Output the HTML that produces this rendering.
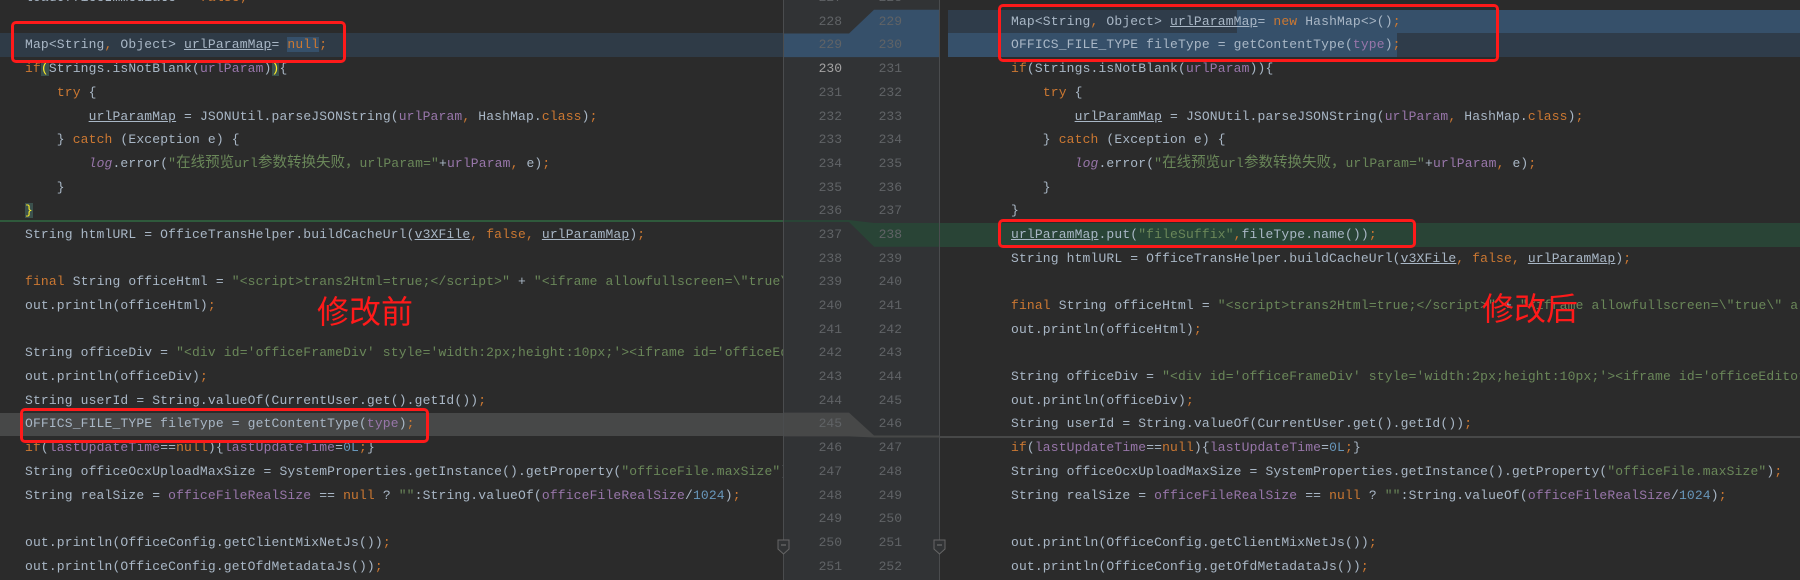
<!DOCTYPE html>
<html><head><meta charset="utf-8"><style>
*{margin:0;padding:0;box-sizing:border-box}
body{width:1800px;height:580px;background:#2b2b2b;overflow:hidden;position:relative;font-family:"Liberation Mono",monospace;font-size:13px;color:#a9b7c6}
.abs{position:absolute}
.code{position:absolute;top:-13.95px;overflow:hidden;letter-spacing:0.15px}
.code div{height:23.7px;line-height:23.7px;white-space:pre}
.k{color:#cc7832}.s{color:#6a8759}.f{color:#9876aa}.n{color:#6897bb}.u{text-decoration:underline}.i{font-style:italic;color:#9876aa}
.c{font-family:"Liberation Mono","Noto Sans CJK SC",sans-serif;font-size:14.5px;letter-spacing:0}
.br{color:#ffef28;background:#3b514d}
.nb{background:#36506a}
.gut{position:absolute;top:-13.95px;color:#606366;text-align:right;width:40px}
.gut div{height:23.7px;line-height:23.7px}
.box{position:absolute;border:3px solid #ff1a1a;border-radius:5px}
.ann{position:absolute;color:#ff1a1a;font-family:"Noto Sans CJK SC",sans-serif;font-size:32px;line-height:36px}
</style></head><body>
<div class="abs" style="left:0;top:33.45px;width:784px;height:23.7px;background:#2f3b47"></div>
<div class="abs" style="left:0;top:220px;width:784px;height:2px;background:#2f5a3c"></div>
<div class="abs" style="left:0;top:412.65px;width:784px;height:23.7px;background:#474848"></div>
<div class="abs" style="left:784px;top:0;width:155px;height:580px;background:#313335"></div>
<div class="abs" style="left:948px;top:9.75px;width:289px;height:23.7px;background:#2f3c4a"></div>
<div class="abs" style="left:1237px;top:9.75px;width:563px;height:23.7px;background:#36506a"></div>
<div class="abs" style="left:948px;top:33.45px;width:449px;height:23.7px;background:#36506a"></div>
<div class="abs" style="left:1397px;top:33.45px;width:403px;height:23.7px;background:#2f3c4a"></div>
<div class="abs" style="left:939px;top:223.05px;width:861px;height:23.7px;background:#294436"></div>
<div class="abs" style="left:939px;top:435.5px;width:861px;height:2px;background:#474848"></div>
<svg class="abs" style="left:0;top:0" width="1800" height="580">
<polygon points="784,33.45 849,33.45 874,9.75 939,9.75 939,57.15 784,57.15" fill="#36506a"/>
<polygon points="784,220 849,220 874,223.05 939,223.05 939,246.75 874,246.75 849,222 784,222" fill="#294436"/>
<polygon points="784,412.65 849,412.65 874,435.5 939,435.5 939,437.5 874,437.5 849,436.35 784,436.35" fill="#474848"/>
<line x1="783.5" y1="0" x2="783.5" y2="580" stroke="#4a4c4e"/>
<line x1="939.5" y1="0" x2="939.5" y2="580" stroke="#4a4c4e"/>
<path d="M778 540h11v9l-5.5 5-5.5-5z" fill="#313335" stroke="#666"/>
<line x1="781" y1="545" x2="786" y2="545" stroke="#777"/>
<path d="M934 540h11v9l-5.5 5-5.5-5z" fill="#313335" stroke="#666"/>
<line x1="937" y1="545" x2="942" y2="545" stroke="#777"/>
</svg>
<div class="gut" style="left:802px"><div>227</div><div>228</div><div>229</div><div style="color:#a4a3a3">230</div><div>231</div><div>232</div><div>233</div><div>234</div><div>235</div><div>236</div><div>237</div><div>238</div><div>239</div><div>240</div><div>241</div><div>242</div><div>243</div><div>244</div><div>245</div><div>246</div><div>247</div><div>248</div><div>249</div><div>250</div><div>251</div></div>
<div class="gut" style="left:862px"><div>228</div><div>229</div><div>230</div><div>231</div><div>232</div><div>233</div><div>234</div><div>235</div><div>236</div><div>237</div><div>238</div><div>239</div><div>240</div><div>241</div><div>242</div><div>243</div><div>244</div><div>245</div><div>246</div><div>247</div><div>248</div><div>249</div><div>250</div><div>251</div><div>252</div></div>
<div class="code" style="left:0;width:783px;padding-left:25px">
<div>loadOfficeImmediate = <span class="k">false</span><span class="k">;</span></div>
<div></div>
<div>Map&lt;String<span class="k">,</span> Object&gt; <span class="u">urlParamMap</span>= <span class="k nb">null</span><span class="k">;</span></div>
<div><span class="k">if</span><span class="br">(</span>Strings.isNotBlank(<span class="f">urlParam</span>)<span class="br">)</span>{</div>
<div>    <span class="k">try</span> {</div>
<div>        <span class="u">urlParamMap</span> = JSONUtil.parseJSONString(<span class="f">urlParam</span><span class="k">,</span> HashMap.<span class="k">class</span>)<span class="k">;</span></div>
<div>    } <span class="k">catch</span> (Exception e) {</div>
<div>        <span class="i">log</span>.error(<span class="s">"<span class="c">在线预览</span>url<span class="c">参数转换失败，</span>urlParam="</span>+<span class="f">urlParam</span><span class="k">,</span> e)<span class="k">;</span></div>
<div>    }</div>
<div><span class="br">}</span></div>
<div>String htmlURL = OfficeTransHelper.buildCacheUrl(<span class="u">v3XFile</span><span class="k">,</span> <span class="k">false</span><span class="k">,</span> <span class="u">urlParamMap</span>)<span class="k">;</span></div>
<div></div>
<div><span class="k">final</span> String officeHtml = <span class="s">"&lt;script&gt;trans2Html=true;&lt;/script&gt;"</span> + <span class="s">"&lt;iframe allowfullscreen=\"true\" allow=\"fullscreen\""</span></div>
<div>out.println(officeHtml)<span class="k">;</span></div>
<div></div>
<div>String officeDiv = <span class="s">"&lt;div id='officeFrameDiv' style='width:2px;height:10px;'&gt;&lt;iframe id='officeEditorFrame'"</span></div>
<div>out.println(officeDiv)<span class="k">;</span></div>
<div>String userId = String.valueOf(CurrentUser.get().getId())<span class="k">;</span></div>
<div>OFFICS_FILE_TYPE fileType = getContentType(<span class="f">type</span>)<span class="k">;</span></div>
<div><span class="k">if</span>(<span class="f">lastUpdateTime</span>==<span class="k">null</span>){<span class="f">lastUpdateTime</span>=<span class="n">0L</span><span class="k">;</span>}</div>
<div>String officeOcxUploadMaxSize = SystemProperties.getInstance().getProperty(<span class="s">"officeFile.maxSize"</span>)<span class="k">;</span></div>
<div>String realSize = <span class="f">officeFileRealSize</span> == <span class="k">null</span> ? <span class="s">""</span>:String.valueOf(<span class="f">officeFileRealSize</span>/<span class="n">1024</span>)<span class="k">;</span></div>
<div></div>
<div>out.println(OfficeConfig.getClientMixNetJs())<span class="k">;</span></div>
<div>out.println(OfficeConfig.getOfdMetadataJs())<span class="k">;</span></div>
</div>
<div class="code" style="left:940px;width:860px;padding-left:71px">
<div></div>
<div>Map&lt;String<span class="k">,</span> Object&gt; <span class="u">urlParamMap</span>= <span class="k">new</span> HashMap&lt;&gt;()<span class="k">;</span></div>
<div>OFFICS_FILE_TYPE fileType = getContentType(<span class="f">type</span>)<span class="k">;</span></div>
<div><span class="k">if</span>(Strings.isNotBlank(<span class="f">urlParam</span>)){</div>
<div>    <span class="k">try</span> {</div>
<div>        <span class="u">urlParamMap</span> = JSONUtil.parseJSONString(<span class="f">urlParam</span><span class="k">,</span> HashMap.<span class="k">class</span>)<span class="k">;</span></div>
<div>    } <span class="k">catch</span> (Exception e) {</div>
<div>        <span class="i">log</span>.error(<span class="s">"<span class="c">在线预览</span>url<span class="c">参数转换失败，</span>urlParam="</span>+<span class="f">urlParam</span><span class="k">,</span> e)<span class="k">;</span></div>
<div>    }</div>
<div>}</div>
<div><span class="u">urlParamMap</span>.put(<span class="s">"fileSuffix"</span><span class="k">,</span>fileType.name())<span class="k">;</span></div>
<div>String htmlURL = OfficeTransHelper.buildCacheUrl(<span class="u">v3XFile</span><span class="k">,</span> <span class="k">false</span><span class="k">,</span> <span class="u">urlParamMap</span>)<span class="k">;</span></div>
<div></div>
<div><span class="k">final</span> String officeHtml = <span class="s">"&lt;script&gt;trans2Html=true;&lt;/script&gt;"</span> + <span class="s">"&lt;iframe allowfullscreen=\"true\" allow=\"fullscreen\""</span></div>
<div>out.println(officeHtml)<span class="k">;</span></div>
<div></div>
<div>String officeDiv = <span class="s">"&lt;div id='officeFrameDiv' style='width:2px;height:10px;'&gt;&lt;iframe id='officeEditorFrame'"</span></div>
<div>out.println(officeDiv)<span class="k">;</span></div>
<div>String userId = String.valueOf(CurrentUser.get().getId())<span class="k">;</span></div>
<div><span class="k">if</span>(<span class="f">lastUpdateTime</span>==<span class="k">null</span>){<span class="f">lastUpdateTime</span>=<span class="n">0L</span><span class="k">;</span>}</div>
<div>String officeOcxUploadMaxSize = SystemProperties.getInstance().getProperty(<span class="s">"officeFile.maxSize"</span>)<span class="k">;</span></div>
<div>String realSize = <span class="f">officeFileRealSize</span> == <span class="k">null</span> ? <span class="s">""</span>:String.valueOf(<span class="f">officeFileRealSize</span>/<span class="n">1024</span>)<span class="k">;</span></div>
<div></div>
<div>out.println(OfficeConfig.getClientMixNetJs())<span class="k">;</span></div>
<div>out.println(OfficeConfig.getOfdMetadataJs())<span class="k">;</span></div>
</div>
<div class="box" style="left:11px;top:21px;width:335px;height:42px"></div>
<div class="box" style="left:20px;top:408px;width:409px;height:35px"></div>
<div class="box" style="left:998px;top:4px;width:501px;height:58px"></div>
<div class="box" style="left:998px;top:219px;width:418px;height:29px"></div>
<div class="ann" style="left:317px;top:292px">修改前</div>
<div class="ann" style="left:1482px;top:289px">修改后</div>
</body></html>
